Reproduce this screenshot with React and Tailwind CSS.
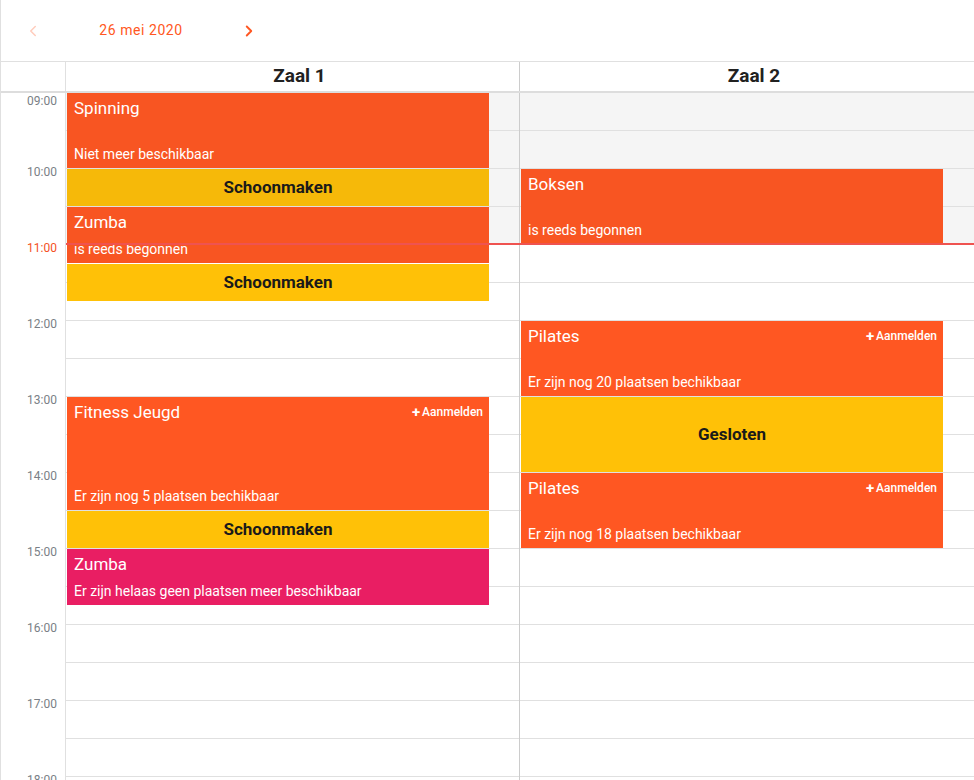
import { ChevronLeft, ChevronRight } from "lucide-react"

const HOUR = 76
const START = 9

const zalen = [
  {
    naam: "Zaal 1",
    events: [
      { from: 9, to: 10, title: "Spinning", sub: "Niet meer beschikbaar", kind: "past" },
      { from: 10, to: 10.5, title: "Schoonmaken", kind: "pastClean" },
      { from: 10.5, to: 11.25, title: "Zumba", sub: "is reeds begonnen", kind: "past" },
      { from: 11.25, to: 11.75, title: "Schoonmaken", kind: "clean" },
      { from: 13, to: 14.5, title: "Fitness Jeugd", sub: "Er zijn nog 5 plaatsen bechikbaar", kind: "open" },
      { from: 14.5, to: 15, title: "Schoonmaken", kind: "clean" },
      { from: 15, to: 15.75, title: "Zumba", sub: "Er zijn helaas geen plaatsen meer beschikbaar", kind: "full" },
    ],
  },
  {
    naam: "Zaal 2",
    events: [
      { from: 10, to: 11, title: "Boksen", sub: "is reeds begonnen", kind: "past" },
      { from: 12, to: 13, title: "Pilates", sub: "Er zijn nog 20 plaatsen bechikbaar", kind: "open" },
      { from: 13, to: 14, title: "Gesloten", kind: "clean" },
      { from: 14, to: 15, title: "Pilates", sub: "Er zijn nog 18 plaatsen bechikbaar", kind: "open" },
    ],
  },
]

const hours = Array.from({ length: 10 }, (_, i) => START + i)
const slots = Array.from({ length: 20 }, (_, i) => i)

function Event({ ev }) {
  const top = (ev.from - START) * HOUR
  const height = (ev.to - ev.from) * HOUR - 1
  const pos = { top, height }

  if (ev.kind === "clean" || ev.kind === "pastClean") {
    return (
      <div
        style={pos}
        className={
          "absolute left-px w-[422px] flex items-center justify-center text-[17px] font-bold text-[#1a1a1a] " +
          (ev.kind === "pastClean" ? "bg-[#f6b909]" : "bg-[#ffc107]")
        }
      >
        {ev.title}
      </div>
    )
  }

  const bg =
    ev.kind === "past" ? "bg-[#f85522]" : ev.kind === "full" ? "bg-[#e91e63]" : "bg-[#ff5722]"

  return (
    <div
      style={pos}
      className={`absolute left-px w-[422px] ${bg} text-white flex flex-col justify-between pl-[7px] pr-[6px] pt-[5px] pb-[6px] overflow-hidden`}
    >
      <div className="flex items-start justify-between">
        <span className="text-[17px] leading-5">{ev.title}</span>
        {ev.kind === "open" && (
          <span className="flex items-center gap-[2px] text-[12px] font-medium leading-5">
            <span className="text-[15px] font-bold leading-5">+</span>Aanmelden
          </span>
        )}
      </div>
      <span className="text-[14px] leading-4">{ev.sub}</span>
    </div>
  )
}

function Kolom({ zaal, last }) {
  return (
    <div className={"relative w-[454px] " + (last ? "" : "border-r border-[#cccccc]")}>
      {slots.map(s => (
        <div
          key={s}
          className={
            "h-[38px] border-b border-[#e0e0e0] " + (s < 4 ? "bg-[#f5f5f5]" : "bg-white")
          }
        />
      ))}
      {zaal.events.map((ev, i) => (
        <Event key={i} ev={ev} />
      ))}
    </div>
  )
}

export default function App() {
  return (
    <div className="w-[974px] h-[780px] overflow-hidden bg-white border-l border-[#e0e0e0] font-['Roboto',sans-serif]">
      <div className="h-[62px] flex items-center border-b border-[#e0e0e0] pl-[8px]">
        <button className="w-12 h-10 flex items-center justify-center text-[#ffccbc]">
          <ChevronLeft size={18} strokeWidth={2} />
        </button>
        <div className="w-[168px] text-center text-[14px] tracking-[0.04em] text-[#ff5722]">
          26 mei 2020
        </div>
        <button className="w-12 h-10 flex items-center justify-center text-[#ff5722]">
          <ChevronRight size={18} strokeWidth={2.5} />
        </button>
      </div>

      <div className="flex h-[31px] border-b-2 border-[#dddddd]">
        <div className="w-[65px] border-r border-[#e0e0e0]" />
        <div className="w-[454px] border-r border-[#cccccc] flex items-center justify-center pl-[14px] text-[19px] font-bold text-[#212121]">
          Zaal 1
        </div>
        <div className="w-[454px] flex items-center justify-center pl-[14px] text-[19px] font-bold text-[#212121]">
          Zaal 2
        </div>
      </div>

      <div className="relative flex">
        <div className="w-[65px] border-r border-[#e0e0e0]">
          {hours.map(h => (
            <div
              key={h}
              className={
                (h === START ? "h-[71px] " : "h-[76px] ") +
                "pr-[8px] text-right text-[12px] leading-4 " +
                (h === 11 ? "text-[#f4511e]" : "text-[#7a7f86]")
              }
            >
              {String(h).padStart(2, "0")}:00
            </div>
          ))}
        </div>
        {zalen.map((z, i) => (
          <Kolom key={z.naam} zaal={z} last={i === zalen.length - 1} />
        ))}
        <div className="absolute left-[65px] right-0 top-[150px] h-[2px] bg-[#ef5350]" />
      </div>
    </div>
  )
}
